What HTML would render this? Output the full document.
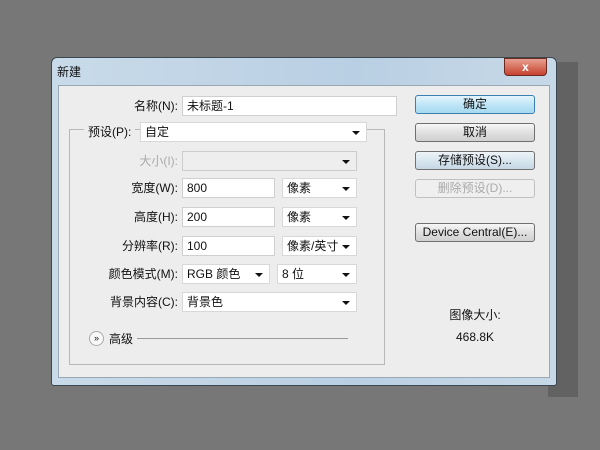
<!DOCTYPE html><html><head><meta charset="utf-8"><style>
*{margin:0;padding:0;box-sizing:border-box}
body{width:600px;height:450px;background:#777;position:relative;overflow:hidden;font-family:"Liberation Sans","Noto Sans CJK SC",sans-serif;font-size:12px;color:#111}
.a{position:absolute}
.shadow{left:548px;top:62px;width:30px;height:335px;background:#626262}
.win{left:51px;top:57px;width:506px;height:329px;background:linear-gradient(90deg,#c9dbea,#b9cfe3 60%,#c7d9e8);border:1px solid #3c4750;border-radius:6px 6px 3px 3px}
.panel{left:58px;top:85px;width:492px;height:293px;background:#ededed;border:1px solid #9aa8b4}
.inp{background:#fff;border:1px solid #cfcfcf;height:20px;line-height:18px;padding-left:4px;font-size:12px}
.sel{background:#fff;border:1px solid #d8d8d8;height:20px;line-height:18px;padding-left:4px}
.sel::after{content:"";position:absolute;right:6px;top:8px;border:4px solid transparent;border-top:4px solid #111;border-bottom:0}
.lbl{text-align:right;width:120px;height:20px;line-height:20px}
.btn{left:415px;width:120px;height:19px;border:1px solid #707070;border-radius:3px;background:linear-gradient(#f6f6f6,#e0e0e0 50%,#d0d0d0);text-align:center;line-height:17px}
</style></head><body>
<div class="a shadow"></div>
<div class="a win"></div>
<div class="a" style="left:57px;top:63px;font-size:12px">新建</div>
<div class="a" style="left:504px;top:58px;width:43px;height:18px;background:linear-gradient(#e8a090,#c7422e);border:1px solid #6b2a20;border-radius:0 0 4px 4px;color:#fff;text-align:center;font-weight:bold;line-height:16px">x</div>
<div class="a panel"></div>
<div class="a" style="left:69px;top:129px;width:316px;height:236px;border:1px solid #b8b8b8"></div>
<div class="a lbl" style="left:58px;top:96px">名称(N):</div>
<div class="a inp" style="left:182px;top:96px;width:215px">未标题-1</div>
<div class="a" style="left:84px;top:122px;background:#ededed;padding:0 4px;height:20px;line-height:20px">预设(P):</div>
<div class="a sel" style="left:140px;top:122px;width:227px">自定</div>
<div class="a lbl" style="left:58px;top:151px;color:#aaa">大小(I):</div>
<div class="a sel" style="left:182px;top:151px;width:175px;background:#eee;border-color:#ccc"></div>
<div class="a lbl" style="left:58px;top:178px">宽度(W):</div>
<div class="a inp" style="left:182px;top:178px;width:93px">800</div>
<div class="a sel" style="left:282px;top:178px;width:75px">像素</div>
<div class="a lbl" style="left:58px;top:207px">高度(H):</div>
<div class="a inp" style="left:182px;top:207px;width:93px">200</div>
<div class="a sel" style="left:282px;top:207px;width:75px">像素</div>
<div class="a lbl" style="left:58px;top:236px">分辨率(R):</div>
<div class="a inp" style="left:182px;top:236px;width:93px">100</div>
<div class="a sel" style="left:282px;top:236px;width:75px">像素/英寸</div>
<div class="a lbl" style="left:58px;top:264px">颜色模式(M):</div>
<div class="a sel" style="left:182px;top:264px;width:88px">RGB 颜色</div>
<div class="a sel" style="left:277px;top:264px;width:80px">8 位</div>
<div class="a lbl" style="left:58px;top:292px">背景内容(C):</div>
<div class="a sel" style="left:182px;top:292px;width:175px">背景色</div>
<div class="a" style="left:89px;top:331px;width:15px;height:15px;border:1px solid #aaa;border-radius:50%;background:#f8f8f8;font-size:9px;text-align:center;line-height:13px">»</div>
<div class="a" style="left:109px;top:330px">高级</div>
<div class="a" style="left:137px;top:338px;width:211px;height:1px;background:#999"></div>
<div class="a btn" style="top:95px;border-color:#3c7fb1;background:linear-gradient(#e6f5fc,#bfe6f7 50%,#a6d9f0)">确定</div>
<div class="a btn" style="top:123px">取消</div>
<div class="a btn" style="top:151px;background:linear-gradient(#eef4f8,#d8e6ef 50%,#c6d8e4)">存储预设(S)...</div>
<div class="a btn" style="top:179px;border-color:#c0c0c0;background:#efefef;color:#aaa">删除预设(D)...</div>
<div class="a btn" style="top:223px">Device Central(E)...</div>
<div class="a" style="left:415px;top:306px;width:120px;text-align:center">图像大小:</div>
<div class="a" style="left:415px;top:330px;width:120px;text-align:center">468.8K</div>
</body></html>
